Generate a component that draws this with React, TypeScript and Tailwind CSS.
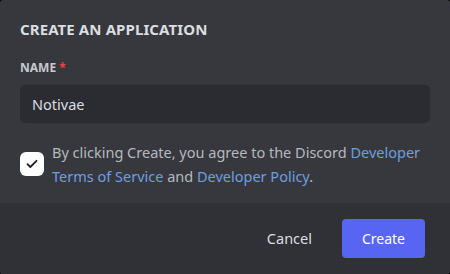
import React, { useState } from 'react';

const App: React.FC = () => {
  const [name, setName] = useState<string>('Notivae');
  const [agreed, setAgreed] = useState<boolean>(true);

  return (
    <div className="w-[450px] h-[274px] bg-black font-['Noto_Sans',sans-serif]">
      <div className="h-full flex flex-col rounded-[3px] overflow-hidden bg-[#37383e]">
        {/* Body */}
        <div className="px-5 pt-[19px] flex-1">
          <h2 className="text-[15px] leading-5 font-bold text-[#dbdee1] tracking-[0.1px]">CREATE AN APPLICATION</h2>
          <label htmlFor="app-name" className="mt-[21px] block text-xs leading-4 font-bold text-[#c7c9ce]">
            NAME <span className="text-[#f23f43]">*</span>
          </label>
          <input
            id="app-name"
            value={name}
            onChange={(e) => setName(e.target.value)}
            className="mt-[9px] w-full h-[38px] rounded-[5px] bg-[#2b2c31] px-3 text-[14.5px] text-[#dbdee1] outline-none"
          />
          <div className="mt-[17px] flex items-center gap-2">
            <button
              type="button"
              onClick={() => setAgreed(!agreed)}
              className="w-6 h-6 shrink-0 rounded-[6px] bg-white flex items-center justify-center"
            >
              {agreed && (
                <svg width="12" height="10" viewBox="0 0 12 10" fill="none">
                  <path d="M1.5 5.2 4.3 8 10.5 1.8" stroke="#1e1f22" strokeWidth="1.8" strokeLinecap="round" strokeLinejoin="round" />
                </svg>
              )}
            </button>
            <p className="text-[14.5px] leading-6 text-[#b5b8be]">
              By clicking Create, you agree to the Discord{' '}
              <a className="text-[#6c9fe0]">Developer Terms of Service</a> and{' '}
              <a className="text-[#6c9fe0]">Developer Policy</a>.
            </p>
          </div>
        </div>
        {/* Footer */}
        <div className="h-[71px] bg-[#303136] flex items-center justify-end gap-[14px] px-[25px]">
          <button type="button" className="h-[39px] px-4 text-[14.5px] text-[#dbdee1]">Cancel</button>
          <button type="button" className="h-[39px] w-[83px] rounded-[4px] bg-[#5865f2] text-[14px] text-white">Create</button>
        </div>
      </div>
    </div>
  );
};

export default App;
